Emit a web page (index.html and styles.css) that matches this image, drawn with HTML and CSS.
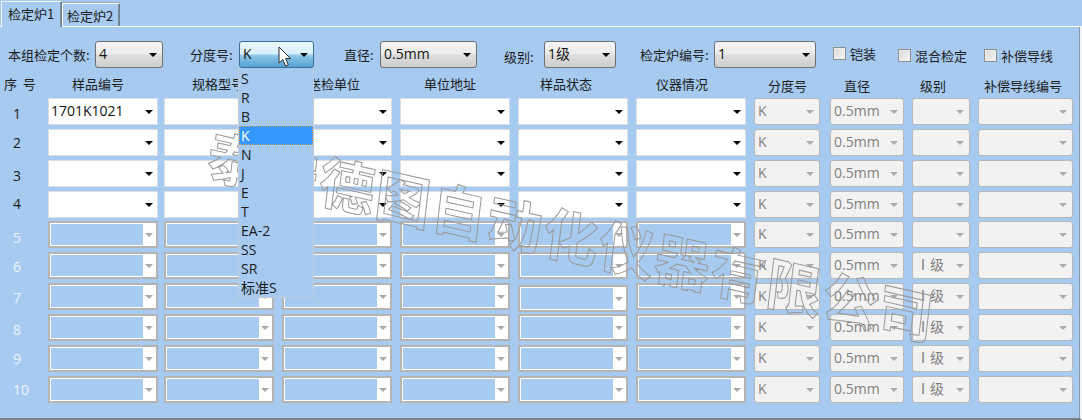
FILE: index.html
```html
<!DOCTYPE html>
<html lang="zh-CN">
<head>
<meta charset="utf-8">
<title>检定炉</title>
<link rel="stylesheet" href="styles.css">
</head>
<body>
<div class="window">
  <div class="tabs">
    <div class="tab active">检定炉1</div>
    <div class="tab">检定炉2</div>
  </div>
  <div class="panel">
    <div class="topbar">
      <div class="field f1"><label class="l1">本组检定个数:</label><div class="top-combo c1"><span class="val">4</span></div></div>
      <div class="field f2"><label class="l2">分度号:</label><div class="top-combo c2 hot"><span class="val">K</span></div></div>
      <div class="field f3"><label class="l3">直径:</label><div class="top-combo c3"><span class="val">0.5mm</span></div></div>
      <div class="field f4"><label class="l4">级别:</label><div class="top-combo c4"><span class="val">1级</span></div></div>
      <div class="field f5"><label class="l5">检定炉编号:</label><div class="top-combo c5"><span class="val">1</span></div></div>
      <div class="check k1"><span class="box"></span>铠装</div>
      <div class="check k2"><span class="box"></span>混合检定</div>
      <div class="check k3"><span class="box"></span>补偿导线</div>
    </div>
    <div class="head">
      <span>序&nbsp;&nbsp;号</span><span>样品编号</span><span>规格型号</span><span>送检单位</span><span>单位地址</span><span>样品状态</span><span>仪器情况</span><span class="low">分度号</span><span class="low">直径</span><span class="low">级别</span><span class="low">补偿导线编号</span>
    </div>
    <div class="rows">
      <div class="row"><span class="no o16">1</span><div class="combo on"><span class="val">1701K1021</span></div><div class="combo on"><span class="val"></span></div><div class="combo on"><span class="val"></span></div><div class="combo on"><span class="val"></span></div><div class="combo on"><span class="val"></span></div><div class="combo on"><span class="val"></span></div><div class="combo gray wk"><span class="val">K</span></div><div class="combo gray wd"><span class="val">0.5mm</span></div><div class="combo gray wg"><span class="val"></span></div><div class="combo gray wb"><span class="val"></span></div></div>
      <div class="row"><span class="no o14">2</span><div class="combo on"><span class="val"></span></div><div class="combo on"><span class="val"></span></div><div class="combo on"><span class="val"></span></div><div class="combo on"><span class="val"></span></div><div class="combo on"><span class="val"></span></div><div class="combo on"><span class="val"></span></div><div class="combo gray wk"><span class="val">K</span></div><div class="combo gray wd"><span class="val">0.5mm</span></div><div class="combo gray wg"><span class="val"></span></div><div class="combo gray wb"><span class="val"></span></div></div>
      <div class="row"><span class="no o16">3</span><div class="combo on"><span class="val"></span></div><div class="combo on"><span class="val"></span></div><div class="combo on"><span class="val"></span></div><div class="combo on"><span class="val"></span></div><div class="combo on"><span class="val"></span></div><div class="combo on"><span class="val"></span></div><div class="combo gray wk"><span class="val">K</span></div><div class="combo gray wd"><span class="val">0.5mm</span></div><div class="combo gray wg"><span class="val"></span></div><div class="combo gray wb"><span class="val"></span></div></div>
      <div class="row"><span class="no o13">4</span><div class="combo on"><span class="val"></span></div><div class="combo on"><span class="val"></span></div><div class="combo on"><span class="val"></span></div><div class="combo on"><span class="val"></span></div><div class="combo on"><span class="val"></span></div><div class="combo on"><span class="val"></span></div><div class="combo gray wk"><span class="val">K</span></div><div class="combo gray wd"><span class="val">0.5mm</span></div><div class="combo gray wg"><span class="val"></span></div><div class="combo gray wb"><span class="val"></span></div></div>
      <div class="row dim first-dim"><span class="no o17">5</span><div class="combo off"><span class="val"></span></div><div class="combo off"><span class="val"></span></div><div class="combo off"><span class="val"></span></div><div class="combo off"><span class="val"></span></div><div class="combo off"><span class="val"></span></div><div class="combo off"><span class="val"></span></div><div class="combo gray wk"><span class="val">K</span></div><div class="combo gray wd"><span class="val">0.5mm</span></div><div class="combo gray wg"><span class="val"></span></div><div class="combo gray wb"><span class="val"></span></div></div>
      <div class="row dim"><span class="no o15">6</span><div class="combo off"><span class="val"></span></div><div class="combo off"><span class="val"></span></div><div class="combo off"><span class="val"></span></div><div class="combo off"><span class="val"></span></div><div class="combo off"><span class="val"></span></div><div class="combo off"><span class="val"></span></div><div class="combo gray wk"><span class="val">K</span></div><div class="combo gray wd"><span class="val">0.5mm</span></div><div class="combo gray wg"><span class="val">Ⅰ级</span></div><div class="combo gray wb"><span class="val"></span></div></div>
      <div class="row dim"><span class="no o15">7</span><div class="combo off"><span class="val"></span></div><div class="combo off"><span class="val"></span></div><div class="combo off"><span class="val"></span></div><div class="combo off"><span class="val"></span></div><div class="combo off shifted"><span class="val"></span></div><div class="combo off"><span class="val"></span></div><div class="combo gray wk"><span class="val">K</span></div><div class="combo gray wd"><span class="val">0.5mm</span></div><div class="combo gray wg"><span class="val">Ⅰ级</span></div><div class="combo gray wb"><span class="val"></span></div></div>
      <div class="row dim"><span class="no o16">8</span><div class="combo off"><span class="val"></span></div><div class="combo off"><span class="val"></span></div><div class="combo off"><span class="val"></span></div><div class="combo off"><span class="val"></span></div><div class="combo off"><span class="val"></span></div><div class="combo off"><span class="val"></span></div><div class="combo gray wk"><span class="val">K</span></div><div class="combo gray wd"><span class="val">0.5mm</span></div><div class="combo gray wg"><span class="val">Ⅰ级</span></div><div class="combo gray wb"><span class="val"></span></div></div>
      <div class="row dim"><span class="no o14">9</span><div class="combo off"><span class="val"></span></div><div class="combo off"><span class="val"></span></div><div class="combo off"><span class="val"></span></div><div class="combo off"><span class="val"></span></div><div class="combo off"><span class="val"></span></div><div class="combo off"><span class="val"></span></div><div class="combo gray wk"><span class="val">K</span></div><div class="combo gray wd"><span class="val">0.5mm</span></div><div class="combo gray wg"><span class="val">Ⅰ级</span></div><div class="combo gray wb"><span class="val"></span></div></div>
      <div class="row dim"><span class="no o14">10</span><div class="combo off"><span class="val"></span></div><div class="combo off"><span class="val"></span></div><div class="combo off"><span class="val"></span></div><div class="combo off"><span class="val"></span></div><div class="combo off"><span class="val"></span></div><div class="combo off"><span class="val"></span></div><div class="combo gray wk"><span class="val">K</span></div><div class="combo gray wd"><span class="val">0.5mm</span></div><div class="combo gray wg"><span class="val">Ⅰ级</span></div><div class="combo gray wb"><span class="val"></span></div></div>
    </div>
  </div>
  <div class="watermark">泰安德图自动化仪器有限公司</div>
  <ul class="dropdown">
    <li>S</li><li>R</li><li>B</li><li class="sel">K</li><li>N</li><li>J</li><li>E</li><li>T</li><li>EA-2</li><li>SS</li><li>SR</li><li>标准S</li>
  </ul>
  <svg class="cursor" width="15" height="22" viewBox="0 0 15 22"><path d="M1 1V17L4.8 13.6L7.6 20L10.4 18.8L7.6 12.6H12.6Z" fill="#fff" stroke="#2a2a2a" stroke-width="1"/></svg>
</div>
</body>
</html>
```
FILE: styles.css
```css
* { box-sizing: border-box; }
html, body { margin: 0; padding: 0; }
body { background: #a6caf0; }
.window {
  position: relative;
  width: 1082px;
  height: 420px;
  overflow: hidden;
  background: #a6caf0;
  font-family: "Noto Sans CJK SC", "Open Sans", sans-serif;
  font-size: 13px;
  line-height: 18px;
  color: #1c1c1c;
}
.tabs {
  display: flex;
  align-items: flex-end;
  height: 26px;
  padding-left: 1px;
}
.tab {
  height: 23px;
  width: 58px;
  padding: 3px 0 0 4px;
  border: 1px solid #f4f8fc;
  border-right-color: #6f7f90;
  border-bottom: 0;
  box-shadow: inset -1px 0 0 #7d8da0, 0 -1px 0 #9aa8b8;
  position: relative;
}
.tab.active {
  height: 26px;
  width: 61px;
  padding: 3px 0 0 6px;
  margin-bottom: -1px;
  z-index: 1;
  background: #a6caf0;
  box-shadow: inset -1px 0 0 #7d8da0;
}
.panel {
  height: 394px;
  padding-top: 14px;
  border-top: 1px solid #fff;
  border-right: 2px solid #f0f4f8;
  border-bottom: 2px solid #7f7f7f;
  box-shadow: inset -1px 0 0 #8a97a6;
}
.topbar { display: flex; height: 27px; align-items: flex-start; }
.field { display: flex; align-items: center; height: 27px; }
.f1 { margin-left: 8px; }
.f2 { margin-left: 27px; }
.f3 { margin-left: 30px; }
.f4 { margin-left: 27px; }
.f5 { margin-left: 24px; }
label { display: block; white-space: nowrap; }
.l1 { width: 87px; }
.l2 { width: 49px; }
.l3 { width: 36px; }
.l4 { width: 40px; padding-top: 5px; }
.l5 { width: 74px; }
.top-combo {
  display: flex;
  align-items: center;
  height: 27px;
  padding-left: 3px;
  border: 1px solid #707070;
  border-radius: 3px;
  font-family: "Open Sans", "Noto Sans CJK SC", sans-serif;
  font-size: 14px;
  color: #141414;
  background: linear-gradient(#f4f4f4, #ebebeb 48%, #dddddd 52%, #cfcfcf);
}
.top-combo .val, .combo .val { padding-bottom: 1px; }
.top-combo::after, .combo::after {
  content: "";
  flex: none;
  width: 0;
  height: 0;
  border-style: solid;
  border-width: 4px 4px 0;
  border-color: #000 transparent transparent;
}
.top-combo::after { margin-right: 5px; }
.top-combo.hot {
  border-color: #3c6f96;
  background: linear-gradient(#eaf6fd, #d9f0fc 48%, #8fc9ea 52%, #56a2d2);
}
.val { flex: 1; white-space: nowrap; }
.c1 { width: 68px; }
.c2 { width: 75px; }
.c3 { width: 97px; }
.c4 { width: 72px; }
.c5 { width: 102px; }
.check { display: flex; align-items: center; gap: 4px; height: 27px; }
.box {
  width: 13px;
  height: 13px;
  border: 1px solid #8e8f8f;
  background: linear-gradient(135deg, #d8d8d8, #f6f6f6);
  box-shadow: inset 0 0 0 1px #eee;
}
.k1 { margin-left: 17px; margin-top: -1px; }
.k2 { margin-left: 22px; padding-top: 2px; }
.k3 { margin-left: 17px; padding-top: 2px; }
.head {
  display: grid;
  grid-template-columns: 68px 120px 116px 116px 116px 116px 112px 76px 76px 64px auto;
  height: 18px;
  margin-top: 7px;
  padding-left: 4px;
  white-space: nowrap;
}
.head .low { padding-top: 2px; }
.rows { display: flex; flex-direction: column; gap: 4px; margin-top: 5px; }
.row {
  display: grid;
  grid-template-columns: 48px 116px 118px 118px 118px 118px 118px 76px 82px 66px 95px;
  height: 27px;
}
.first-dim { margin-top: -1px; }
.no { padding-left: 13px; line-height: 16px; font-size: 14px; font-family: "Open Sans", sans-serif; }
.dim .no { color: #eef4fb; }
.o13 { padding-top: 5px; }
.o14 { padding-top: 6px; }
.o15 { padding-top: 7px; }
.o16 { padding-top: 8px; }
.o17 { padding-top: 9px; }
.combo {
  display: flex;
  align-items: center;
  width: 110px;
  height: 27px;
  font-family: "Open Sans", "Noto Sans CJK SC", sans-serif;
  font-size: 14px;
}
.combo::after { margin-right: 4px; margin-left: 0; }
.combo.on {
  padding-left: 2px;
  background: #fff;
  border: 1px solid #d9dfe6;
  color: #141414;
}
.combo.off {
  background: #fff;
  border: 2px solid #b4b4b4;
  padding: 1px 0 1px 1px;
  align-items: stretch;
}
.combo.off .val { background: #a6caf0; margin-right: 18px; padding: 0; }
.combo.off::after {
  align-self: center;
  border-top-color: #aaa;
  margin-right: 3px;
  margin-left: -16px;
}
.combo.shifted { margin-top: 2px; }
.combo.gray {
  padding-left: 3px;
  background: #f2f2f2;
  border: 1px solid #b8b8b8;
  border-radius: 3px;
  color: #808080;
}
.combo.gray::after { border-top-color: #ababab; margin-right: 5px; }
.wk { width: 66px; }
.wd { width: 74px; }
.wg { width: 58px; }
.wb { width: 95px; }
.watermark {
  position: absolute;
  left: 212px;
  top: 122px;
  font-size: 56px;
  line-height: 60px;
  font-weight: 700;
  letter-spacing: 1.3px;
  white-space: nowrap;
  color: transparent;
  -webkit-text-stroke: 1px #9a9a9a;
  transform-origin: 0 0;
  transform: rotate(12.8deg) skewX(6deg);
  pointer-events: none;
}
.dropdown {
  position: absolute;
  left: 238px;
  top: 68px;
  width: 76px;
  height: 230px;
  margin: 0;
  padding: 1px 0 0;
  list-style: none;
  background: #a6caf0;
  border: 1px solid #c4cbd6;
  border-top: 0;
  font-family: "Open Sans", "Noto Sans CJK SC", sans-serif;
  font-size: 14px;
  line-height: 19px;
}
.dropdown li { height: 19px; padding-left: 2px; }
.dropdown .sel {
  background: #3399ff;
  color: #fff;
  outline: 1px dotted #c99a6e;
  outline-offset: -1px;
}
.cursor { position: absolute; left: 278px; top: 46px; }
```
